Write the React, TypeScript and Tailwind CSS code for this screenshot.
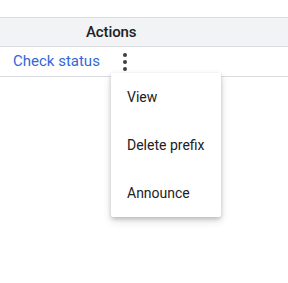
import React from "react";

export default function App() {
  return (
    <div className="relative w-[288px] h-[283px] bg-white" style={{ fontFamily: "Roboto, 'Noto Sans', sans-serif" }}>
      <div className="h-[17px]" />
      <div className="h-[30px] bg-[#f1f3f4] border-y border-[#dadce0] flex items-center pl-[86px] text-[15px] font-medium text-[#202124]">
        <span className="tracking-[-0.1px]">Actions</span>
      </div>
      <div className="h-[30px] border-b border-[#dadce0] flex items-center">
        <span className="pl-[13px] text-[15px] text-[#3367d6]">Check status</span>
        <div className="ml-[23px] flex flex-col items-center gap-[3px] pt-[1px]">
          <span className="block w-[4px] h-[4px] rounded-full bg-[#3c4043]" />
          <span className="block w-[4px] h-[4px] rounded-full bg-[#3c4043]" />
          <span className="block w-[4px] h-[4px] rounded-full bg-[#3c4043]" />
        </div>
      </div>
      <div className="absolute left-[111px] top-[73px] w-[110px] bg-white rounded-[2px] shadow-[0_2px_4px_rgba(0,0,0,0.2),0_4px_10px_rgba(0,0,0,0.12)] flex flex-col text-[14px] text-[#202124]">
        <div className="h-[48px] flex items-center pl-[16px]">View</div>
        <div className="h-[48px] flex items-center pl-[16px]">Delete prefix</div>
        <div className="h-[48px] flex items-center pl-[16px]">Announce</div>
      </div>
    </div>
  );
}
